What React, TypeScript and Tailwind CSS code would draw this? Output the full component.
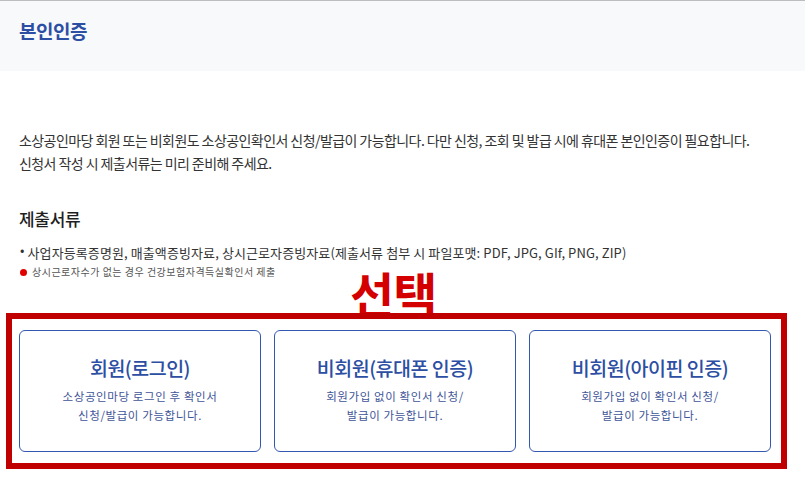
import React from "react";

const font = { fontFamily: '"Malgun Gothic", "Noto Sans CJK KR", "Noto Sans", sans-serif' };

function Card({ title, lines }: { title: string; lines: string[] }) {
  return (
    <div className="w-[242px] h-[122px] rounded-[6px] border border-[#3358b0] flex flex-col items-center pt-[24px]">
      <div className="text-[19.5px] leading-[26px] font-medium text-[#2c4ea3] tracking-[-0.5px]">{title}</div>
      <div className="mt-[6px] text-[11.5px] leading-[19px] text-[#3f5598] text-center tracking-[0.6px]">
        {lines.map((l, i) => (
          <div key={i}>{l}</div>
        ))}
      </div>
    </div>
  );
}

export default function App() {
  return (
    <div className="w-[805px] h-[497px] bg-white overflow-hidden" style={font}>
      <div className="border-t border-[#bdbdbd] h-[71px] bg-[#f8f9fb] px-[19px] pt-[16px]">
        <div className="text-[19px] leading-[28px] font-bold text-[#2c4ea3] tracking-[-0.5px]">본인인증</div>
      </div>
      <div className="px-[19px] pt-[58px]">
        <div className="text-[14px] leading-[23px] text-[#333] tracking-[-0.57px]">
          <div>소상공인마당 회원 또는 비회원도 소상공인확인서 신청/발급이 가능합니다. 다만 신청, 조회 및 발급 시에 휴대폰 본인인증이 필요합니다.</div>
          <div>신청서 작성 시 제출서류는 미리 준비해 주세요.</div>
        </div>
        <div className="mt-[32px] text-[17px] leading-[24px] font-medium text-[#1f1f1f] tracking-[-0.3px]">제출서류</div>
        <div className="mt-[13px] w-fit text-[13px] leading-[18px] text-[#333] tracking-[0.1px]">
          <span className="text-[#333] ml-[1px] mr-[3px] relative top-[-3px]">•</span>사업자등록증명원, 매출액증빙자료, 상시근로자증빙자료(제출서류 첨부 시 파일포맷: PDF, JPG, GIf, PNG, ZIP)
        </div>
        <div className="mt-[2px] w-fit flex items-center text-[10px] leading-[16px] text-[#555] tracking-[0.5px]">
          <span className="inline-block w-[7px] h-[7px] rounded-full bg-[#e00000] ml-[1px] mr-[5px]"></span>
          상시근로자수가 없는 경우 건강보험자격득실확인서 제출
        </div>
      </div>
      <div className="h-[33px] relative">
        <div className="absolute left-[350px] top-[-12px] text-[48px] leading-[48px] font-bold text-[#d40000] tracking-[-1px]">선택</div>
      </div>
      <div className="relative ml-[6px] w-[781px] h-[156px] border-[6px] border-[#c00000] pl-[7px] pt-[11px]">
        <div className="flex gap-[13px]">
          <Card title="회원(로그인)" lines={["소상공인마당 로그인 후 확인서", "신청/발급이 가능합니다."]} />
          <Card title="비회원(휴대폰 인증)" lines={["회원가입 없이 확인서 신청/", "발급이 가능합니다."]} />
          <Card title="비회원(아이핀 인증)" lines={["회원가입 없이 확인서 신청/", "발급이 가능합니다."]} />
        </div>
      </div>
    </div>
  );
}
